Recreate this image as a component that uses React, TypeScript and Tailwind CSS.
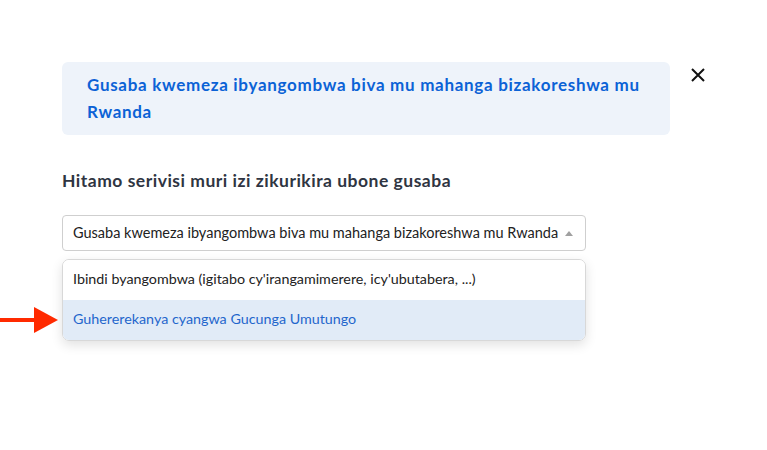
import React from "react";

export default function App() {
  return (
    <div className="relative w-[767px] h-[450px] bg-white" style={{ fontFamily: "Lato, 'Open Sans', sans-serif" }}>
      <div className="flex items-start pt-[62px] pl-[62px]">
        <div className="flex flex-col w-[608px]">
          <div className="bg-[#eef3fa] rounded-md px-[25px] pt-[9px] pb-[10px] min-h-[73px]">
            <p className="text-[17px] leading-[27px] font-bold tracking-[0.7px] text-[#0b62d6]">
              Gusaba kwemeza ibyangombwa biva mu mahanga bizakoreshwa mu Rwanda
            </p>
          </div>
          <h2 className="mt-[34px] text-[17.5px] leading-[24px] font-bold tracking-[0.5px] text-[#2f3542]">
            Hitamo serivisi muri izi zikurikira ubone gusaba
          </h2>
          <div className="mt-[22px] w-[524px] h-[36px] border border-[#cfcfcf] rounded-[4px] flex items-center justify-between pl-[10px] pr-[12px]">
            <span className="text-[14.5px] text-[#222]">
              Gusaba kwemeza ibyangombwa biva mu mahanga bizakoreshwa mu Rwanda
            </span>
            <span className="w-0 h-0 border-l-[4px] border-r-[4px] border-b-[5px] border-l-transparent border-r-transparent border-b-[#a0a0a0]" />
          </div>
          <div className="mt-[8px] w-[524px] rounded-[7px] border border-[#d8d8d8] shadow-[0_4px_12px_rgba(0,0,0,0.12)] overflow-hidden">
            <div className="h-[40px] flex items-center pl-[10px] pb-[2px] text-[14.3px] text-[#222] bg-white">
              Ibindi byangombwa (igitabo cy'irangamimerere, icy'ubutabera, ...)
            </div>
            <div className="h-[40px] flex items-center pl-[10px] pb-[2px] text-[14.3px] text-[#1f66cc] bg-[#e1ebf7]">
              Guhererekanya cyangwa Gucunga Umutungo
            </div>
          </div>
        </div>
        <button className="ml-[21px] mt-[6px] w-[14px] h-[14px]">
          <svg viewBox="0 0 14 14" width="14" height="14">
            <path d="M1 1 L13 13 M13 1 L1 13" stroke="#111" strokeWidth="2" />
          </svg>
        </button>
      </div>
      <svg className="absolute left-0 top-[306px]" width="60" height="28" viewBox="0 0 60 28">
        <rect x="0" y="12" width="36" height="4" fill="#ff2a00" />
        <polygon points="34,1 58,14 34,27" fill="#ff2a00" />
      </svg>
    </div>
  );
}
